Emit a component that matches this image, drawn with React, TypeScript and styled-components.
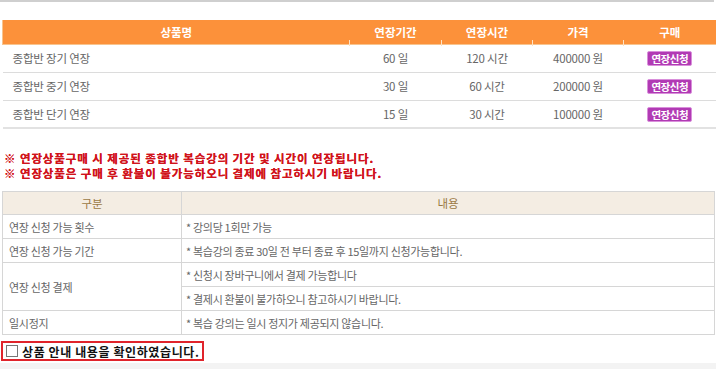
import React from "react";
import styled, { createGlobalStyle } from "styled-components";

const Global = createGlobalStyle`
  html, body { margin: 0; padding: 0; background: #fff; }
  body { font-family: "Noto Sans CJK KR", "Noto Sans", sans-serif; overflow: hidden; }
  * { box-sizing: border-box; }
`;

const Page = styled.div`
  width: 716px;
  height: 369px;
  display: flex;
  flex-direction: column;
`;

const TopRule = styled.div`
  height: 2px;
  background: #cfcfcf;
  margin-right: 2px;
`;

const Content = styled.div`
  padding: 18px 0 0 2px;
  display: flex;
  flex-direction: column;
  flex: 1;
`;

const ProductTable = styled.table`
  width: 714px;
  border-collapse: collapse;
  table-layout: fixed;
  font-size: 11.5px;
  color: #666;
`;

const HeadCell = styled.th<{ $w?: number }>`
  position: relative;
  width: ${(p) => (p.$w ? `${p.$w}px` : "auto")};
  height: 24px;
  padding: 0;
  background: #fc913a;
  border-bottom: 1px solid #f8c48e;
  color: #fff;
  font-weight: 700;
  font-size: 11.5px;
  text-align: center;
  &:first-child { border-left: 1px solid #f8c48e; }
  &:not(:last-child)::after {
    content: "";
    position: absolute;
    right: 0;
    bottom: -2px;
    width: 1px;
    height: 6px;
    background: #fde3c6;
  }
`;

const Cell = styled.td<{ $left?: boolean }>`
  height: 28px;
  padding: 0 0 0 ${(p) => (p.$left ? "10px" : "0")};
  text-align: ${(p) => (p.$left ? "left" : "center")};
  border-bottom: 1px solid #dcdcdc;
  vertical-align: middle;
  letter-spacing: -0.2px;
`;

const BodyRow = styled.tr`
  &:last-child td { border-bottom: 2px solid #e2e2e2; }
`;

const ApplyButton = styled.button`
  height: 15px;
  padding: 0 3px;
  border: 1px solid #d98fdb;
  border-radius: 2px;
  background: #b13ab4;
  color: #fff;
  font-family: inherit;
  font-size: 10.5px;
  font-weight: 700;
  line-height: 13px;
  letter-spacing: -0.5px;
  cursor: pointer;
`;

const Notice = styled.div`
  margin: 22px 0 0 2px;
  display: flex;
  flex-direction: column;
`;

const NoticeLine = styled.p`
  margin: 0;
  height: 15px;
  color: #d0141c;
  font-size: 11.5px;
  font-weight: 700;
  line-height: 15px;
  letter-spacing: 0.9px;
  white-space: nowrap;
  text-shadow: 0 0 0.4px #d0141c;
`;

const InfoTable = styled.table`
  margin-top: 10px;
  width: 713px;
  border-collapse: collapse;
  table-layout: fixed;
  font-size: 11px;
  color: #666;
`;

const InfoHead = styled.th<{ $w?: number }>`
  width: ${(p) => (p.$w ? `${p.$w}px` : "auto")};
  height: 23px;
  padding: 0;
  background: #f4ede3;
  color: #9b7a45;
  font-weight: 400;
  font-size: 11.5px;
  border: 1px solid #d6d6d6;
`;

const InfoCell = styled.td<{ $first?: boolean }>`
  height: 24px;
  padding: 0 0 0 ${(p) => (p.$first ? "6px" : "4px")};
  border: 1px solid #d6d6d6;
  vertical-align: middle;
  letter-spacing: -0.3px;
`;

const Confirm = styled.label`
  margin-top: 6px;
  width: 203px;
  height: 20px;
  display: flex;
  align-items: center;
  gap: 4px;
  margin-left: -1px;
  padding-left: 3px;
  border: 2px solid #e0242b;
  color: #111;
  font-size: 12px;
  font-weight: 700;
  letter-spacing: 0.6px;
  white-space: nowrap;
`;

const Box = styled.span`
  width: 12px;
  height: 12px;
  border: 1px solid #777;
  background: #fff;
  flex: none;
`;

const BottomBand = styled.div`
  margin-top: auto;
  height: 6px;
  background: #f3f3f3;
  margin-left: -2px;
`;

const products = [
  { name: "종합반 장기 연장", days: "60 일", hours: "120 시간", price: "400000 원" },
  { name: "종합반 중기 연장", days: "30 일", hours: "60 시간", price: "200000 원" },
  { name: "종합반 단기 연장", days: "15 일", hours: "30 시간", price: "100000 원" },
];

export default function App() {
  return (
    <Page>
      <Global />
      <TopRule />
      <Content>
        <ProductTable>
          <thead>
            <tr>
              <HeadCell $w={347}>상품명</HeadCell>
              <HeadCell $w={92}>연장기간</HeadCell>
              <HeadCell $w={91}>연장시간</HeadCell>
              <HeadCell $w={91}>가격</HeadCell>
              <HeadCell>구매</HeadCell>
            </tr>
          </thead>
          <tbody>
            {products.map((p) => (
              <BodyRow key={p.name}>
                <Cell $left>{p.name}</Cell>
                <Cell>{p.days}</Cell>
                <Cell>{p.hours}</Cell>
                <Cell>{p.price}</Cell>
                <Cell>
                  <ApplyButton>연장신청</ApplyButton>
                </Cell>
              </BodyRow>
            ))}
          </tbody>
        </ProductTable>

        <Notice>
          <NoticeLine>※ 연장상품구매 시 제공된 종합반 복습강의 기간 및 시간이 연장됩니다.</NoticeLine>
          <NoticeLine>※ 연장상품은 구매 후 환불이 불가능하오니 결제에 참고하시기 바랍니다.</NoticeLine>
        </Notice>

        <InfoTable>
          <thead>
            <tr>
              <InfoHead $w={179}>구분</InfoHead>
              <InfoHead>내용</InfoHead>
            </tr>
          </thead>
          <tbody>
            <tr>
              <InfoCell $first>연장 신청 가능 횟수</InfoCell>
              <InfoCell>* 강의당 1회만 가능</InfoCell>
            </tr>
            <tr>
              <InfoCell $first>연장 신청 가능 기간</InfoCell>
              <InfoCell>* 복습강의 종료 30일 전 부터 종료 후 15일까지 신청가능합니다.</InfoCell>
            </tr>
            <tr>
              <InfoCell $first rowSpan={2}>연장 신청 결제</InfoCell>
              <InfoCell>* 신청시 장바구니에서 결제 가능합니다</InfoCell>
            </tr>
            <tr>
              <InfoCell>* 결제시 환불이 불가하오니 참고하시기 바랍니다.</InfoCell>
            </tr>
            <tr>
              <InfoCell $first>일시정지</InfoCell>
              <InfoCell>* 복습 강의는 일시 정지가 제공되지 않습니다.</InfoCell>
            </tr>
          </tbody>
        </InfoTable>

        <Confirm>
          <Box />
          상품 안내 내용을 확인하였습니다.
        </Confirm>
        <BottomBand />
      </Content>
    </Page>
  );
}
